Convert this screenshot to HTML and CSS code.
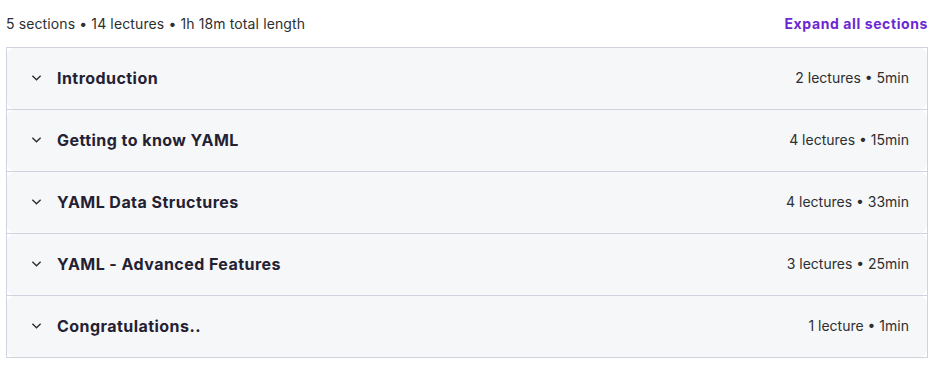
FILE: index.html
```html
<!DOCTYPE html>
<html>
<head>
<meta charset="utf-8">
<link rel="stylesheet" href="styles.css">
</head>
<body>
<div class="curriculum">
  <div class="summary">
    <span class="stats">5 sections • 14 lectures • 1h 18m total length</span>
    <button class="expand">Expand all sections</button>
  </div>
  <div class="sections">
    <div class="section"><div class="panel">
      <svg class="chev" viewBox="0 0 12 8" width="11" height="8"><path d="M1.5 1.5 L6 6 L10.5 1.5" fill="none" stroke="#2d2f31" stroke-width="1.5"/></svg>
      <span class="title">Introduction</span>
      <span class="meta">2 lectures • 5min</span>
    </div></div>
    <div class="section"><div class="panel">
      <svg class="chev" viewBox="0 0 12 8" width="11" height="8"><path d="M1.5 1.5 L6 6 L10.5 1.5" fill="none" stroke="#2d2f31" stroke-width="1.5"/></svg>
      <span class="title">Getting to know YAML</span>
      <span class="meta">4 lectures • 15min</span>
    </div></div>
    <div class="section"><div class="panel">
      <svg class="chev" viewBox="0 0 12 8" width="11" height="8"><path d="M1.5 1.5 L6 6 L10.5 1.5" fill="none" stroke="#2d2f31" stroke-width="1.5"/></svg>
      <span class="title">YAML Data Structures</span>
      <span class="meta">4 lectures • 33min</span>
    </div></div>
    <div class="section"><div class="panel">
      <svg class="chev" viewBox="0 0 12 8" width="11" height="8"><path d="M1.5 1.5 L6 6 L10.5 1.5" fill="none" stroke="#2d2f31" stroke-width="1.5"/></svg>
      <span class="title">YAML - Advanced Features</span>
      <span class="meta">3 lectures • 25min</span>
    </div></div>
    <div class="section"><div class="panel">
      <svg class="chev" viewBox="0 0 12 8" width="11" height="8"><path d="M1.5 1.5 L6 6 L10.5 1.5" fill="none" stroke="#2d2f31" stroke-width="1.5"/></svg>
      <span class="title">Congratulations..</span>
      <span class="meta">1 lecture • 1min</span>
    </div></div>
  </div>
</div>
</body>
</html>
```
FILE: styles.css
```css
* { box-sizing: border-box; }
body {
  margin: 0;
  padding: 0 7px 0 6px;
  background: #fff;
  font-family: Inter, "Noto Sans", sans-serif;
  color: #2d2f31;
}
.curriculum { width: 922px; }
.summary {
  display: flex;
  justify-content: space-between;
  align-items: center;
  height: 47px;
}
.stats {
  font-size: 14px;
  color: #2d2f31;
  letter-spacing: 0.12px;
}
.expand {
  border: 0;
  background: none;
  padding: 0;
  font-family: inherit;
  font-size: 14px;
  font-weight: 700;
  color: #6d28d2;
  letter-spacing: 0.6px;
}
.sections {
  border: 1px solid #d1d2e0;
  border-bottom: 0;
}
.section {
  border-bottom: 1px solid #d1d2e0;
  background: #fff;
}
.panel {
  display: flex;
  align-items: center;
  height: 61px;
  background: #f6f7f9;
  border-radius: 8px;
  padding: 0 18px 2px 24px;
}
.chev { flex: none; margin-right: 15px; }
.title {
  flex: 1;
  font-size: 16px;
  font-weight: 700;
  letter-spacing: 0.45px;
  color: #232132;
}
.meta {
  font-size: 14px;
}
```
